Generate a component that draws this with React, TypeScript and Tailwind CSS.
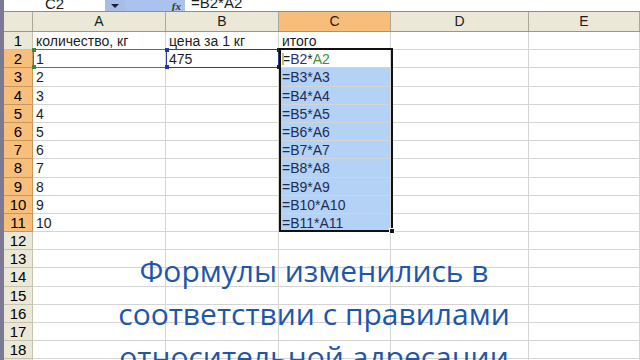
import React from 'react';

const cols = [
  { key: 'A', w: 'w-[133px]' },
  { key: 'B', w: 'w-[113px]' },
  { key: 'C', w: 'w-[112px]' },
  { key: 'D', w: 'w-[138px]' },
  { key: 'E', w: 'flex-1' },
];

type Row = { n: number; a?: string; b?: string; c?: React.ReactNode };

const rows: Row[] = [
  { n: 1, a: 'количество, кг', b: 'цена за 1 кг', c: 'итого' },
  {
    n: 2,
    a: '1',
    b: '475',
    c: (
      <>
        =<span className="text-[#2b2f8a]">B2</span>*<span className="text-[#3f8f3f]">A2</span>
      </>
    ),
  },
  ...Array.from({ length: 9 }, (_, i) => ({ n: i + 3, a: String(i + 2), c: `=B${i + 3}*A${i + 3}` })),
  ...Array.from({ length: 8 }, (_, i) => ({ n: i + 12 })),
];

function Cell({ w, children, className = '' }: { w: string; children?: React.ReactNode; className?: string }) {
  return (
    <div className={`${w} h-full shrink-0 border-r border-b border-[#d4d4d4] px-[3px] leading-[18px] whitespace-nowrap overflow-hidden ${className}`}>
      {children}
    </div>
  );
}

export default function App() {
  return (
    <div className="w-[640px] h-[360px] overflow-hidden bg-white flex font-['Liberation_Sans',Arial,sans-serif] text-[14px] text-[#1c1c1c] relative">
      {/* window frame strip */}
      <div className="w-[4px] shrink-0 bg-[#7c7a92]" />

      <div className="flex-1 flex flex-col">
        {/* name box + formula bar */}
        <div className="h-[12px] shrink-0 flex border-b border-[#8d8d8d] overflow-hidden">
          <div className="w-[101px] bg-white leading-[8px] text-center text-[15px]">C2</div>
          <div className="w-[20px] bg-[#a7bde3] flex items-center justify-center">
            <div className="w-0 h-0 border-l-[4px] border-r-[4px] border-t-[4px] border-l-transparent border-r-transparent border-t-[#1d1d3a]" />
          </div>
          <div className="w-[60px] bg-[#aac2ec] flex justify-end items-center pr-[4px]">
            <span className="font-['Liberation_Serif',serif] italic font-bold text-[11px] leading-[8px] text-[#333]">fx</span>
          </div>
          <div className="flex-1 bg-white pl-[6px] leading-[6px] text-[15px]">=B2*A2</div>
        </div>

        {/* column headers */}
        <div className="h-[20px] shrink-0 flex border-b border-[#9a9788]">
          <div className="w-[29px] shrink-0 bg-[#ebe8d8] border-r border-[#aca899]" />
          {cols.map((c) => (
            <div
              key={c.key}
              className={`${c.w} shrink-0 border-r border-[#aca899] text-center leading-[19px] ${
                c.key === 'C' ? 'bg-[#f8bd78]' : 'bg-[#ebe8d8]'
              }`}
            >
              {c.key}
            </div>
          ))}
        </div>

        {/* rows */}
        {rows.map((r) => {
          const sel = r.n >= 2 && r.n <= 11;
          return (
            <div key={r.n} className="h-[18.2px] shrink-0 flex">
              <div
                className={`w-[29px] shrink-0 h-full border-r border-b text-center leading-[18px] text-[15px] text-black ${
                  sel ? 'bg-[#f8be7b] border-[#c9975a]' : 'bg-[#ebe8d8] border-[#c5c2b2]'
                }`}
              >
                {r.n}
              </div>
              <Cell w="w-[133px]">{r.a}</Cell>
              <Cell w="w-[113px]">{r.b}</Cell>
              <Cell
                w="w-[112px]"
                className={r.n >= 3 && r.n <= 11 ? 'bg-[#b4d2f5] text-[#1f2b52]' : ''}
              >
                {r.c}
              </Cell>
              <Cell w="w-[138px]" />
              <Cell w="flex-1" />
            </div>
          );
        })}
      </div>

      {/* reference highlight A2 (green) */}
      <div className="absolute left-[33px] top-[49px] w-[134px] h-[19px] border border-[#3d8a3d]">
        <div className="absolute -left-[2px] -top-[2px] w-[4px] h-[4px] bg-[#3d8a3d]" />
        <div className="absolute -left-[2px] -bottom-[2px] w-[4px] h-[4px] bg-[#3d8a3d]" />
      </div>
      {/* reference highlight B2 (blue) */}
      <div className="absolute left-[166px] top-[49px] w-[113px] h-[19px] border border-[#2a3a9a]">
        <div className="absolute -left-[2px] -top-[2px] w-[4px] h-[4px] bg-[#2235b0]" />
        <div className="absolute -left-[2px] -bottom-[2px] w-[4px] h-[4px] bg-[#2235b0]" />
        <div className="absolute -right-[2px] -top-[2px] w-[3px] h-[4px] bg-[#222]" />
        <div className="absolute -right-[2px] -bottom-[2px] w-[3px] h-[4px] bg-[#222]" />
      </div>

      {/* selection C2:C11 */}
      <div className="absolute left-[279px] top-[48px] w-[114px] h-[184px] border-2 border-[#111]">
        <div className="absolute left-[1px] top-[3px] w-[2px] h-[12px] bg-[#c8c060]" />
        <div className="absolute -right-[4px] -bottom-[4px] w-[6px] h-[6px] bg-[#111] border border-white" />
      </div>

      {/* caption */}
      <div className="absolute left-0 right-0 top-[249px] flex flex-col items-center pr-[12px] font-['Open_Sans',sans-serif] text-[30px] leading-[43px] text-[#1f57a8]">
        <div>Формулы изменились в</div>
        <div>соответствии с правилами</div>
        <div>относительной адресации</div>
      </div>
    </div>
  );
}
